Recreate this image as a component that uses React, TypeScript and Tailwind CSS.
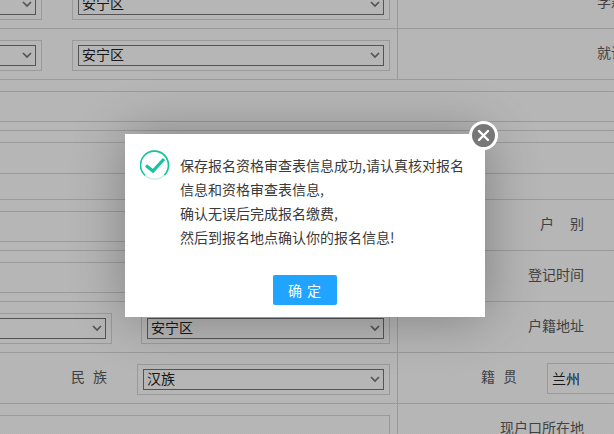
const FONT = "font-['Noto_Sans_CJK_SC','Noto_Sans',sans-serif]";

function Box({ className, children }: { className: string; children?: React.ReactNode }) {
  return (
    <div className={`h-[31px] shrink-0 border border-[#d9d9d9] px-[5px] py-[4px] ${className}`}>{children}</div>
  );
}

function Sel({ value }: { value?: string }) {
  return (
    <div className="relative h-[21px] w-full">
      <select
        defaultValue={value}
        className={`block h-[21px] w-full appearance-none border border-[#767676] bg-white pl-[3px] pb-[2px] text-[14px] leading-[17px] text-[#222] ${FONT}`}
      >
        <option>{value ?? ""}</option>
      </select>
      <svg
        width="10"
        height="7"
        viewBox="0 0 10 7"
        fill="none"
        stroke="#777"
        strokeWidth="1.7"
        className="pointer-events-none absolute right-[4px] top-[7px]"
      >
        <path d="M1 1L5 5L9 1" />
      </svg>
    </div>
  );
}

function Line({ h, children }: { h: number; children?: React.ReactNode }) {
  const cls =
    h === 51
      ? "h-[51px]"
      : h === 12
        ? "h-[12px]"
        : h === 30
          ? "h-[30px]"
          : h === 9
            ? "h-[9px]"
            : h === 31
              ? "h-[31px]"
              : "h-[26px]";
  return <div className={`flex w-[614px] shrink-0 border-t border-[#d9d9d9] ${cls}`}>{children}</div>;
}

function Left({ children }: { children?: React.ReactNode }) {
  return (
    <div className="flex h-full w-[398px] shrink-0 items-start border-r border-[#d9d9d9] pt-[11px]">{children}</div>
  );
}

function Right({ children, className = "" }: { children?: React.ReactNode; className?: string }) {
  return (
    <div className={`flex h-full min-w-0 flex-1 items-center overflow-hidden whitespace-nowrap pb-[3px] text-[14px] text-[#5c5c5c] ${className}`}>
      {children}
    </div>
  );
}

function TwoSelects({ w1, gap, w2 }: { w1: string; gap: string; w2: string }) {
  return (
    <div className={`-ml-5 flex ${gap}`}>
      <Box className={w1}>
        <Sel />
      </Box>
      <Box className={w2}>
        <Sel value="安宁区" />
      </Box>
    </div>
  );
}

export default function App() {
  return (
    <div className={`relative h-[434px] w-[614px] overflow-hidden bg-white ${FONT}`}>
      <div className="-mt-[23px] flex flex-col">
        <Line h={51}>
          <Left>
            <TwoSelects w1="w-[62px]" gap="gap-[30px]" w2="w-[318px]" />
          </Left>
          <Right className="pl-[199px]">学籍号码</Right>
        </Line>
        <Line h={51}>
          <Left>
            <TwoSelects w1="w-[62px]" gap="gap-[30px]" w2="w-[318px]" />
          </Left>
          <Right className="pl-[199px]">就读学校</Right>
        </Line>
        <Line h={12} />
        <Line h={30} />
        <Line h={9} />
        <Line h={12} />
        <Line h={31} />
        <Line h={26} />
        <Line h={51}>
          <Left>
            <Box className="-ml-5 w-[410px]" />
          </Left>
          <Right className="justify-end pr-[30px]">
            <span>户</span>
            <span className="ml-[16px]">别</span>
          </Right>
        </Line>
        <Line h={51}>
          <Left>
            <Box className="-ml-5 w-[410px]" />
          </Left>
          <Right className="justify-end pr-[30px]">登记时间</Right>
        </Line>
        <Line h={51}>
          <Left>
            <TwoSelects w1="w-[132px]" gap="gap-[29px]" w2="w-[249px]" />
          </Left>
          <Right className="justify-end pr-[30px]">户籍地址</Right>
        </Line>
        <Line h={51}>
          <Left>
            <div className="ml-[71px] flex h-[31px] w-[66px] shrink-0 items-center pb-[6px] text-[14px] text-[#5c5c5c]">
              <span>民</span>
              <span className="ml-[8px]">族</span>
            </div>
            <Box className="w-[253px]">
              <Sel value="汉族" />
            </Box>
          </Left>
          <Right className="pl-[83px]">
            <span>籍</span>
            <span className="ml-[8px]">贯</span>
            <div className="ml-[30px] mt-[3px] flex h-[31px] w-[90px] shrink-0 items-center border border-[#d9d9d9] pl-[4px] text-[14px] text-[#222]">
              兰州
            </div>
          </Right>
        </Line>
        <Line h={51}>
          <Left>
            <div className="-ml-5 h-[60px] w-[410px] shrink-0 border border-[#d9d9d9]" />
          </Left>
          <Right className="justify-end pr-[30px]">现户口所在地</Right>
        </Line>
      </div>

      <div className="absolute inset-0 bg-black/[0.28]">
        <div className="h-full w-full bg-[repeating-conic-gradient(rgba(0,0,0,0.025)_0_25%,transparent_0_50%)] bg-[length:2px_2px]" />
      </div>

      <div className="absolute left-[125px] top-[134px] flex h-[183px] w-[360px] flex-col bg-white shadow-[1px_1px_50px_rgba(0,0,0,0.3)]">
        <div className="flex pl-[15px] pt-[16px]">
          <svg width="30" height="31" viewBox="0 0 30 31" className="shrink-0" fill="none">
            <circle cx="14.5" cy="15" r="14" stroke="#c4efe5" strokeWidth="1.4" />
            <path d="M5 25.4A14 14 0 1 1 24.4 25" stroke="#17c39f" strokeWidth="1.6" />
            <path d="M6 15.5L13 21L24 9" stroke="#17c39f" strokeWidth="3.2" />
          </svg>
          <p className="ml-[10px] mt-[3px] text-[14px] leading-[24px] text-[#3a3a3a]">
            保存报名资格审查表信息成功,请认真核对报名
            <br />
            信息和资格审查表信息,
            <br />
            确认无误后完成报名缴费,
            <br />
            然后到报名地点确认你的报名信息!
          </p>
        </div>
        <div className="mt-[26px] flex justify-center pr-[1px]">
          <button className="h-[30px] w-[64px] rounded-[2px] bg-[#20a4ff] pl-[1px] text-[14px] tracking-[1px] text-white">
            确 定
          </button>
        </div>

        <button className="absolute -right-[13px] -top-[13px] flex h-[29px] w-[29px] items-center justify-center rounded-full border-[3px] border-white bg-[#777]">
          <svg width="13" height="13" viewBox="0 0 13 13" stroke="white" strokeWidth="2.4" strokeLinecap="round">
            <path d="M2 2L11 11M11 2L2 11" />
          </svg>
        </button>
      </div>
    </div>
  );
}
